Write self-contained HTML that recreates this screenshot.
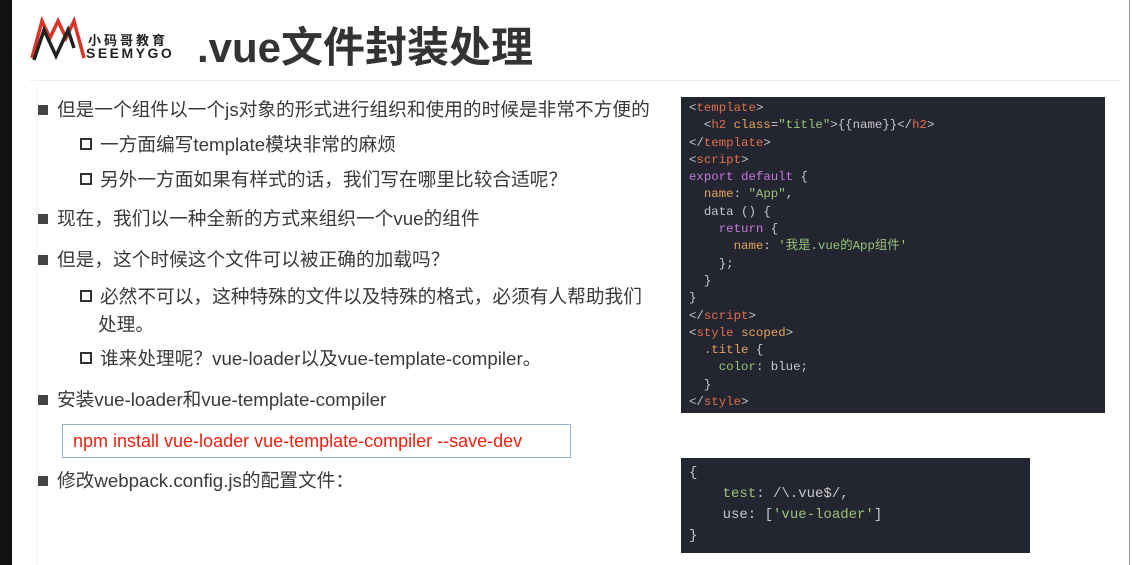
<!DOCTYPE html>
<html><head><meta charset="utf-8"><style>
body{margin:0;width:1132px;height:565px;background:#fff;position:relative;overflow:hidden;font-family:"Liberation Sans","Noto Sans CJK SC",sans-serif;color:#333}
.abs{position:absolute;white-space:nowrap}
.lb{position:absolute;left:0;top:0;width:12px;height:565px;background:#111}
.rb{position:absolute;left:1129px;top:0;width:1px;height:565px;background:#999}
.t{font-size:18.7px;color:#3a3a3a}
.sq{display:inline-block;width:10px;height:10px;background:#444;margin-right:9px;vertical-align:1px}
.hq{display:inline-block;width:8px;height:8px;border:2px solid #333;margin-right:8px;vertical-align:1px}
.code{position:absolute;background:#232530;font-family:"Liberation Mono","Noto Sans CJK SC",monospace;color:#c8c8c8;white-space:pre}
.r{color:#e0704c}.p{color:#c678dd}.o{color:#e5a45c}.g{color:#98c379}
</style></head><body>
<div class="lb"></div><div class="rb"></div>
<svg class="abs" style="left:30px;top:16px" width="56" height="46" viewBox="0 0 56 46">
<path d="M2 42 L12 5 L20 22 L28 5 L36 22 L44 5 L54 42" fill="none" stroke="#d8342a" stroke-width="3.5"/>
<path d="M4 44 L14 14 L26 40 L38 14 L44 32" fill="none" stroke="#222" stroke-width="3.5"/>
</svg>
<div class="abs" style="left:88px;top:30px;font-size:13px;font-weight:bold;color:#222;letter-spacing:3px">小码哥教育</div>
<div class="abs" style="left:86px;top:45px;font-size:14px;font-weight:bold;color:#222;letter-spacing:2.5px">SEEMYGO</div>
<div class="abs" style="left:197px;top:14px;font-size:42px;font-weight:bold;color:#333">.vue文件封装处理</div>
<div class="abs" style="left:30px;top:80px;width:1090px;height:1px;background:#eee"></div>
<div class="abs" style="left:36px;top:86px;width:1px;height:479px;background:#f2f2f2"></div>
<div class="abs t" style="left:38px;top:95px"><span class="sq"></span>但是一个组件以一个js对象的形式进行组织和使用的时候是非常不方便的</div>
<div class="abs t" style="left:80px;top:130px"><span class="hq"></span>一方面编写template模块非常的麻烦</div>
<div class="abs t" style="left:80px;top:165px"><span class="hq"></span>另外一方面如果有样式的话，我们写在哪里比较合适呢？</div>
<div class="abs t" style="left:38px;top:204px"><span class="sq"></span>现在，我们以一种全新的方式来组织一个vue的组件</div>
<div class="abs t" style="left:38px;top:245px"><span class="sq"></span>但是，这个时候这个文件可以被正确的加载吗？</div>
<div class="abs t" style="left:80px;top:282px"><span class="hq"></span>必然不可以，这种特殊的文件以及特殊的格式，必须有人帮助我们</div>
<div class="abs t" style="left:98px;top:310px">处理。</div>
<div class="abs t" style="left:80px;top:344px"><span class="hq"></span>谁来处理呢？vue-loader以及vue-template-compiler。</div>
<div class="abs t" style="left:38px;top:385px"><span class="sq"></span>安装vue-loader和vue-template-compiler</div>
<div class="abs" style="left:62px;top:424px;width:509px;height:34px;border:1px solid #8fb4d8;box-sizing:border-box;color:#f02010;font-size:18px;line-height:32px;padding-left:10px">npm install vue-loader vue-template-compiler --save-dev</div>
<div class="abs t" style="left:38px;top:466px"><span class="sq"></span>修改webpack.config.js的配置文件：</div>
<div class="code" style="left:681px;top:97px;width:424px;height:316px;font-size:12.4px;line-height:17.3px;padding:3px 0 0 8px;box-sizing:border-box">&lt;<span class="r">template</span>&gt;
  &lt;<span class="r">h2</span> <span class="o">class</span>=<span class="g">"title"</span>&gt;{{name}}&lt;/<span class="r">h2</span>&gt;
&lt;/<span class="r">template</span>&gt;
&lt;<span class="r">script</span>&gt;
<span class="p">export default</span> {
  <span class="o">name</span>: <span class="g">"App"</span>,
  data () {
    <span class="p">return</span> {
      <span class="o">name</span>: <span class="g">'我是.vue的App组件'</span>
    };
  }
}
&lt;/<span class="r">script</span>&gt;
&lt;<span class="r">style</span> <span class="o">scoped</span>&gt;
  <span class="o">.title</span> {
    <span class="g">color</span>: blue;
  }
&lt;/<span class="r">style</span>&gt;</div>
<div class="code" style="left:681px;top:458px;width:349px;height:95px;font-size:14px;line-height:21px;padding:5px 0 0 8px;box-sizing:border-box">{
    <span class="g">test</span>: /\.vue$/,
    use: [<span class="g">'vue-loader'</span>]
}</div>
</body></html>
